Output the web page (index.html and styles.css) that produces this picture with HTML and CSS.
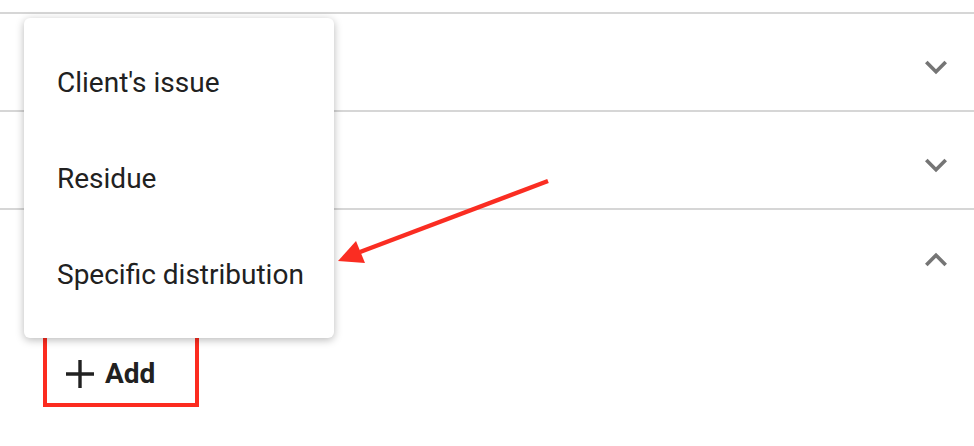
FILE: index.html
```html
<!DOCTYPE html>
<html>
<head>
    <meta charset="utf-8">
    <link rel="stylesheet" href="styles.css">
</head>
<body>
    <div class="page">
        <div class="acc-row">
            <div class="acc-head">
                <svg class="acc-toggle" viewBox="0 0 24 24"><path d="M16.59 8.59L12 13.17 7.41 8.59 6 10l6 6 6-6z"/></svg>
            </div>
        </div>
        <div class="acc-row">
            <div class="acc-head">
                <svg class="acc-toggle" viewBox="0 0 24 24"><path d="M16.59 8.59L12 13.17 7.41 8.59 6 10l6 6 6-6z"/></svg>
            </div>
        </div>
        <div class="acc-row open">
            <div class="acc-head">
                <svg class="acc-toggle" viewBox="0 0 24 24"><path d="M12 8l-6 6 1.41 1.41L12 10.83l4.59 4.58L18 14z"/></svg>
            </div>
            <div class="acc-body">
                <div class="highlight">
                    <button class="add-btn">
                        <svg class="add-icon" viewBox="0 0 28 28"><path d="M14 0v28M0 14h28"/></svg>
                        <span>Add</span>
                    </button>
                </div>
            </div>
        </div>

        <ul class="menu">
            <li class="menu-item">Client's issue</li>
            <li class="menu-item">Residue</li>
            <li class="menu-item">Specific distribution</li>
        </ul>

        <svg class="pointer" viewBox="0 0 240 110">
            <line x1="228" y1="21" x2="40" y2="92"/>
            <polygon points="18,101 36,81 45,103"/>
        </svg>
    </div>
</body>
</html>
```

FILE: styles.css
```css
body {
    margin: 0;
    background: #fff;
    font-family: Roboto, "Liberation Sans", sans-serif;
    color: #212121;
}

.page {
    position: relative;
    width: 974px;
    height: 446px;
    padding-top: 12px;
    box-sizing: border-box;
    overflow: hidden;
}

.acc-row {
    border-top: 2px solid #d6d6d6;
}

.acc-head {
    height: 86px;
    padding-top: 10px;
    display: flex;
    align-items: center;
    justify-content: flex-end;
    padding-right: 16px;
}

.acc-toggle {
    width: 44px;
    height: 44px;
    fill: #757575;
}

.open .acc-toggle {
    margin-top: 12px;
}

.open .acc-head {
    height: 80px;
    padding-top: 16px;
    align-items: flex-start;
}

.acc-body {
    padding: 26px 0 0 43px;
}

.highlight {
    display: inline-block;
    border: 4px solid #fc2b1f;
}

.add-btn {
    display: flex;
    align-items: center;
    gap: 11px;
    height: 67px;
    width: 148px;
    padding: 8px 0 0 19px;
    box-sizing: border-box;
    border: 0;
    background: none;
    font-family: Roboto, "Liberation Sans", sans-serif;
    font-size: 28px;
    font-weight: 700;
    color: #212121;
}

.add-icon {
    width: 28px;
    height: 28px;
    stroke: #212121;
    stroke-width: 3.4;
}

.menu {
    position: absolute;
    left: 24px;
    top: 18px;
    width: 310px;
    margin: 0;
    padding: 16px 0;
    list-style: none;
    background: #fff;
    border-radius: 6px;
    box-shadow: 0 2px 9px rgba(0, 0, 0, 0.28);
}

.menu-item {
    height: 96px;
    line-height: 98px;
    padding-left: 33px;
    font-size: 28px;
}

.pointer {
    position: absolute;
    left: 320px;
    top: 160px;
    width: 240px;
    height: 110px;
}

.pointer line {
    stroke: #fa2d22;
    stroke-width: 4.5;
}

.pointer polygon {
    fill: #fa2d22;
}
```
